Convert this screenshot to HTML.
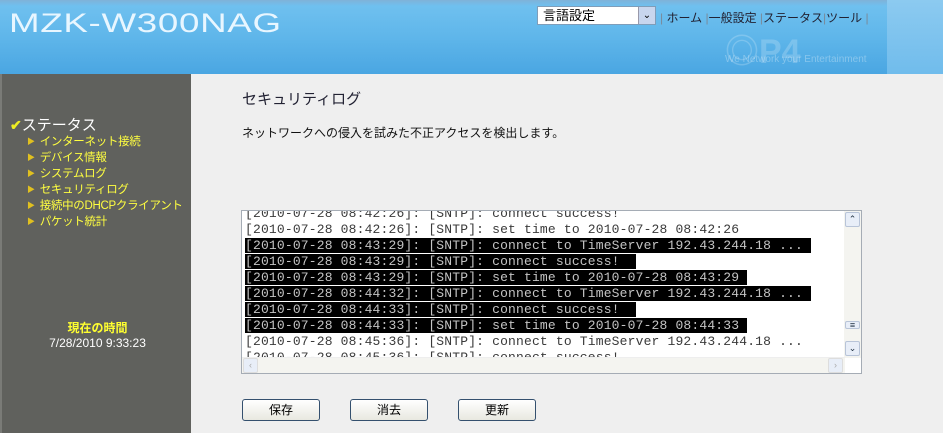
<!DOCTYPE html>
<html><head><meta charset="utf-8"><style>
*{margin:0;padding:0;box-sizing:border-box}
body{width:943px;height:433px;overflow:hidden;background:#efefef;font-family:"Liberation Sans","Noto Sans CJK JP",sans-serif;position:relative}
#hdr{position:absolute;left:0;top:0;width:943px;height:74px;background:linear-gradient(180deg,#7fb2d8 0%,#6fc0ef 8%,#5fb6ea 50%,#4aa6e2 100%)}
#hdr .band{position:absolute;left:887px;top:0;width:56px;height:74px;background:linear-gradient(180deg,#8ccaf0,#70bcec)}
#logo{position:absolute;left:9px;top:8px;color:#e8f6ff;font-size:27px;font-family:"Liberation Sans",sans-serif;transform:scaleX(1.36);transform-origin:0 0;letter-spacing:0.5px}
#sel{position:absolute;left:537px;top:6px;width:119px;height:19px;background:#fff;border:1px solid #7f9db9;font-size:13px;padding-left:5px;line-height:17px}
#sel .ar{position:absolute;right:0;top:0;width:17px;height:17px;background:#c8d6ee;border-left:1px solid #99a;font-size:10px;text-align:center;line-height:17px}
#nav{position:absolute;left:660px;top:9px;font-size:12px;color:#223}
#nav i{font-style:normal;color:#7a8a9a}
#p4{position:absolute;left:725px;top:24px;color:rgba(255,255,255,.2);font-size:34px;font-weight:bold}
#we{position:absolute;left:725px;top:54px;color:rgba(255,255,255,.3);font-size:10px}
#side{position:absolute;left:0;top:74px;width:191px;height:359px;background:#60615d;border-left:2px solid #7a7b77}
#side .h{position:absolute;left:8px;top:40px;color:#fff;font-size:15px}
#side .h b{color:#ee2;font-size:14px}
#side ul{position:absolute;left:25px;top:60px;list-style:none;font-size:11.5px;color:#ffff40;line-height:16px;white-space:nowrap;letter-spacing:-0.3px}
#side li:before{content:"▶";font-size:8px;color:#e0c020;margin-right:5px;vertical-align:1px}
#clk{position:absolute;left:0;width:191px;top:245px;text-align:center;font-size:12px;color:#fff}
#clk b{color:#ffff30}
h1{position:absolute;left:242px;top:88px;font-size:15px;font-weight:normal;color:#223}
#desc{position:absolute;left:242px;top:124px;font-size:12px;color:#111}
#ta{position:absolute;left:241px;top:210px;width:621px;height:164px;background:#fff;border:1px solid #a5acb5;overflow:hidden}
#log{position:absolute;left:3px;top:-5px;font-family:"Liberation Mono",monospace;font-size:13px;letter-spacing:0.17px;line-height:16px;color:#3a3a3a;white-space:pre}
#log span{background:#000;color:#c4c4c4}
#vs{position:absolute;right:0;top:0;width:17px;height:147px;background:#f4f4f0}
.sb{position:absolute;width:15px;height:15px;border:1px solid #b8c4d8;background:#e8eef8;font-size:9px;text-align:center;line-height:13px;color:#234;border-radius:2px}
#hs{position:absolute;left:0;bottom:0;width:603px;height:16px;background:#f4f4f0;border-top:1px solid #eee}
.btn{position:absolute;top:399px;width:78px;height:22px;border:1px solid #34506e;border-radius:3px;background:linear-gradient(#fff,#e8e8e0);font-size:12px;text-align:center;line-height:20px;color:#000}
</style></head><body>
<div id="hdr"><div class="band"></div><div id="logo">MZK-W300NAG</div><div id="p4">◎P4</div><div id="we">We Network your Entertainment</div>
<div id="sel">言語設定<div class="ar">⌄</div></div>
<div id="nav"><i>|</i> ホーム <i>|</i>一般設定 <i>|</i>ステータス<i>|</i>ツール <i>|</i></div></div>
<div id="side"><div class="h"><b>✔</b>ステータス</div>
<ul><li>インターネット接続</li><li>デバイス情報</li><li>システムログ</li><li>セキュリティログ</li><li>接続中のDHCPクライアント</li><li>パケット統計</li></ul>
<div id="clk"><b>現在の時間</b><br>7/28/2010 9:33:23</div></div>
<h1>セキュリティログ</h1>
<div id="desc">ネットワークへの侵入を試みた不正アクセスを検出します。</div>
<div id="ta"><div id="log">[2010-07-28 08:42:26]: [SNTP]: connect success!
[2010-07-28 08:42:26]: [SNTP]: set time to 2010-07-28 08:42:26
<span>[2010-07-28 08:43:29]: [SNTP]: connect to TimeServer 192.43.244.18 ... </span>
<span>[2010-07-28 08:43:29]: [SNTP]: connect success!  </span>
<span>[2010-07-28 08:43:29]: [SNTP]: set time to 2010-07-28 08:43:29 </span>
<span>[2010-07-28 08:44:32]: [SNTP]: connect to TimeServer 192.43.244.18 ... </span>
<span>[2010-07-28 08:44:33]: [SNTP]: connect success!  </span>
<span>[2010-07-28 08:44:33]: [SNTP]: set time to 2010-07-28 08:44:33 </span>
[2010-07-28 08:45:36]: [SNTP]: connect to TimeServer 192.43.244.18 ...
[2010-07-28 08:45:36]: [SNTP]: connect success!</div>
<div id="vs"><div class="sb" style="left:1px;top:1px">⌃</div><div class="sb" style="left:1px;top:110px;height:8px;line-height:6px">≡</div><div class="sb" style="left:1px;top:130px">⌄</div></div>
<div id="hs"><div class="sb" style="left:1px;top:0;border-color:#ddd;color:#aaa">‹</div><div class="sb" style="left:586px;top:0;border-color:#ddd;color:#aaa">›</div></div>
</div>
<div class="btn" style="left:242px">保存</div>
<div class="btn" style="left:350px">消去</div>
<div class="btn" style="left:458px">更新</div>
</body></html>
